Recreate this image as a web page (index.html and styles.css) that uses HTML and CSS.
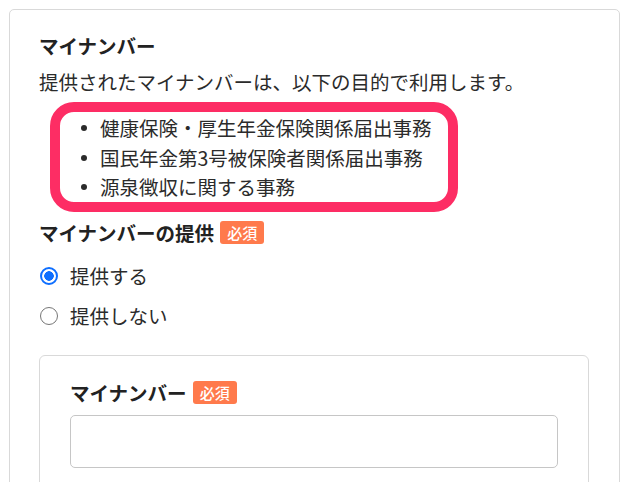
FILE: index.html
```html
<!DOCTYPE html>
<html lang="ja">
<head>
<meta charset="utf-8">
<title>マイナンバー</title>
<link rel="stylesheet" href="styles.css">
</head>
<body>
<div class="page">
  <section class="card">
    <h2 class="card-title">マイナンバー</h2>
    <p class="desc">提供されたマイナンバーは、以下の目的で利用します。</p>
    <div class="purpose">
      <ul class="purpose-list">
        <li>健康保険・厚生年金保険関係届出事務</li>
        <li>国民年金第3号被保険者関係届出事務</li>
        <li>源泉徴収に関する事務</li>
      </ul>
      <div class="highlight"></div>
    </div>
    <div class="field-label">マイナンバーの提供<span class="badge">必須</span></div>
    <div class="radios">
      <label class="radio"><input type="radio" name="provide" checked><span>提供する</span></label>
      <label class="radio"><input type="radio" name="provide"><span>提供しない</span></label>
    </div>
    <div class="subcard">
      <div class="field-label sub">マイナンバー<span class="badge">必須</span></div>
      <input class="text-input" type="text">
    </div>
  </section>
</div>
</body>
</html>
```

FILE: styles.css
```css
html, body {
  margin: 0;
  padding: 0;
  background: #ffffff;
}

body {
  font-family: "Noto Sans CJK JP", "Noto Sans", sans-serif;
  color: #2b2b2b;
  font-size: 19.5px;
}

.page {
  padding: 9px;
}

.card {
  border: 1px solid #d9d9d9;
  border-radius: 5px;
  padding: 22px 30px 40px 29px;
  display: flex;
  flex-direction: column;
}

.card-title {
  margin: 0;
  font-size: 19.5px;
  line-height: 28px;
  font-weight: 700;
  color: #222222;
}

.desc {
  margin: 8px 0 0;
  line-height: 28px;
}

.purpose {
  position: relative;
  margin-top: 17px;
}

.purpose-list {
  list-style: none;
  margin: 0;
  padding: 0 0 0 61px;
}

.purpose-list li {
  position: relative;
  line-height: 29.5px;
}

.purpose-list li::before {
  content: "";
  position: absolute;
  left: -19px;
  top: 12px;
  width: 6px;
  height: 6px;
  border-radius: 50%;
  background: #2b2b2b;
}

.highlight {
  position: absolute;
  left: 11px;
  top: -11px;
  width: 408px;
  height: 110px;
  box-sizing: border-box;
  border: 10px solid #fd2d64;
  border-radius: 24px;
  pointer-events: none;
}

.field-label {
  display: flex;
  align-items: center;
  margin-top: 17px;
  font-weight: 700;
  line-height: 28px;
  color: #222222;
}

.badge {
  margin-left: 6px;
  background: #ff7a4c;
  color: #ffffff;
  font-size: 15px;
  font-weight: 500;
  line-height: 23px;
  padding: 0 7px;
  border-radius: 3px;
}

.radios {
  display: flex;
  flex-direction: column;
  gap: 12px;
  margin-top: 15px;
}

.radio {
  display: flex;
  align-items: center;
  line-height: 28px;
}

.radio input {
  appearance: none;
  -webkit-appearance: none;
  margin: 0 12px 0 1px;
  width: 18px;
  height: 18px;
  border: 1.5px solid #767676;
  border-radius: 50%;
  box-sizing: border-box;
  background: #ffffff;
}

.radio input:checked {
  border: 2px solid #0f6fff;
  background: radial-gradient(circle, #0f6fff 0 4.5px, #ffffff 5px);
}

.subcard {
  margin-top: 25px;
  border: 1px solid #d9d9d9;
  border-radius: 6px;
  padding: 23px 30px 40px 30px;
  display: flex;
  flex-direction: column;
}

.field-label.sub {
  margin-top: 0;
}

.text-input {
  margin-top: 8px;
  height: 53px;
  box-sizing: border-box;
  border: 1px solid #c6c6c6;
  border-radius: 5px;
  font-size: 19px;
  font-family: inherit;
  padding: 0 12px;
}
```
